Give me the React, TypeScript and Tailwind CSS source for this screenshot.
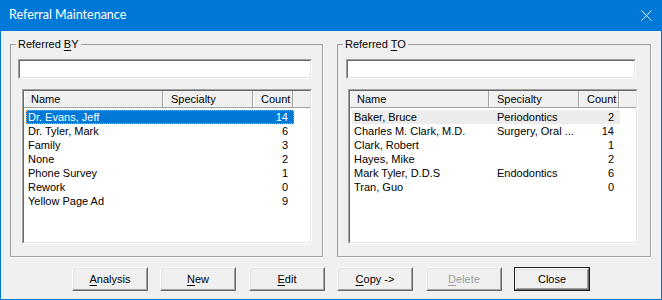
import React from 'react';

interface IRow {
  name: string;
  specialty: string;
  count: number;
}

const referredBy: IRow[] = [
  { name: 'Dr. Evans, Jeff', specialty: '', count: 14 },
  { name: 'Dr. Tyler, Mark', specialty: '', count: 6 },
  { name: 'Family', specialty: '', count: 3 },
  { name: 'None', specialty: '', count: 2 },
  { name: 'Phone Survey', specialty: '', count: 1 },
  { name: 'Rework', specialty: '', count: 0 },
  { name: 'Yellow Page Ad', specialty: '', count: 9 },
];

const referredTo: IRow[] = [
  { name: 'Baker, Bruce', specialty: 'Periodontics', count: 2 },
  { name: 'Charles M. Clark, M.D.', specialty: 'Surgery, Oral ...', count: 14 },
  { name: 'Clark, Robert', specialty: '', count: 1 },
  { name: 'Hayes, Mike', specialty: '', count: 2 },
  { name: 'Mark Tyler, D.D.S', specialty: 'Endodontics', count: 6 },
  { name: 'Tran, Guo', specialty: '', count: 0 },
];

const Mn: React.FC<{ children: React.ReactNode }> = ({ children }) => (
  <span className="underline decoration-1 underline-offset-[2px]">{children}</span>
);

const HeaderCell: React.FC<{ width?: string; children?: React.ReactNode }> = ({ width, children }) => (
  <div
    className={`${width ?? 'flex-1'} h-full flex items-center pl-[7px] border-r border-[#a0a0a0] shadow-[inset_1px_0_0_white]`}
  >
    {children}
  </div>
);

interface IListProps {
  rows: IRow[];
  selected: number;
  focused: boolean;
}

const ListView: React.FC<IListProps> = ({ rows, selected, focused }) => {
  return (
    <div className="w-[290px] h-[155px] border border-t-[#a0a0a0] border-l-[#a0a0a0] border-r-white border-b-white">
      <div className="h-full bg-white border border-t-[#696969] border-l-[#696969] border-r-[#e3e3e3] border-b-[#e3e3e3]">
        <div className="flex h-[17px] bg-[#f0f0f0] border-b border-[#a0a0a0]">
          <HeaderCell width="w-[139px]">Name</HeaderCell>
          <HeaderCell width="w-[90px]">
            <span className="pl-[1px]">Specialty</span>
          </HeaderCell>
          <HeaderCell width="w-[40px]">
            <span className="pl-[1px]">Count</span>
          </HeaderCell>
          <div className="flex-1 h-full shadow-[inset_1px_0_0_white]" />
        </div>
        <div className="pt-[2px]">
          {rows.map((row, i) => {
            const isSel = i === selected;
            const rowClass = isSel
              ? focused
                ? 'bg-[#0078d7] text-white outline outline-1 outline-dotted -outline-offset-1 outline-[#f7a04a]'
                : 'bg-[#ececec] text-black'
              : 'text-black';
            return (
              <div key={row.name} className={`ml-[2px] w-[268px] h-[14px] leading-[14px] flex ${rowClass}`}>
                <div className="w-[137px] pl-[2px] whitespace-nowrap overflow-hidden">{row.name}</div>
                <div className="w-[90px] pl-[8px] whitespace-nowrap overflow-hidden">{row.specialty}</div>
                <div className="w-[41px] pr-[6px] text-right">{row.count}</div>
              </div>
            );
          })}
        </div>
      </div>
    </div>
  );
};

const GroupBox: React.FC<{
  label: React.ReactNode;
  width: string;
  inputClass: string;
  listClass: string;
  children: React.ReactNode;
}> = ({ label, width, inputClass, listClass, children }) => (
  <fieldset
    className={`${width} border border-[#a0a0a0] shadow-[1px_1px_0_white] pb-[12px]`}
  >
    <legend className="ml-[5px] px-[2px] leading-[13px]">{label}</legend>
    <div
      className={`${inputClass} mt-[8px] h-[20px] bg-white border border-t-[#a0a0a0] border-l-[#a0a0a0] border-r-white border-b-white`}
    >
      <div className="h-full border border-t-[#696969] border-l-[#696969] border-r-[#e3e3e3] border-b-[#e3e3e3]" />
    </div>
    <div className={`${listClass} mt-[10px]`}>{children}</div>
  </fieldset>
);

const DlgButton: React.FC<{
  children: React.ReactNode;
  isDefault?: boolean;
  disabled?: boolean;
  className?: string;
}> = ({ children, isDefault, disabled, className }) => (
  <div
    className={`${className ?? ''} w-[76px] h-[24px] ${
      isDefault ? 'border border-[#1e1e1e]' : ''
    }`}
  >
    <div className="h-full border border-t-white border-l-white border-r-[#696969] border-b-[#696969]">
      <div
        className={`h-full flex items-center justify-center bg-[#f0f0f0] border border-t-[#e3e3e3] border-l-[#e3e3e3] border-r-[#a0a0a0] border-b-[#a0a0a0] ${
          disabled ? 'text-[#a0a0a0]' : 'text-black'
        }`}
      >
        {children}
      </div>
    </div>
  </div>
);

export default function App() {
  return (
    <div className="w-[662px] h-[300px] flex flex-col font-['Liberation_Sans',Arial,sans-serif] text-[11px] text-black">
      <div className="h-[31px] bg-[#0078d7] flex items-center justify-between pl-[9px] pr-[10px] text-white">
        <span className="font-['Lato','Noto_Sans',sans-serif] text-[12.5px]">Referral Maintenance</span>
        <svg width="11" height="11" viewBox="0 0 11 11" className="mt-[-1px]">
          <path d="M0.5 0.5 L10.5 10.5 M10.5 0.5 L0.5 10.5" stroke="white" strokeWidth="1" />
        </svg>
      </div>
      <div className="flex-1 flex flex-col bg-[#f0f0f0] border-x border-b border-[#0078d7]">
        <div className="flex mt-[7px] ml-[9px] gap-[14px]">
          <GroupBox
            label={
              <>
                Referred <Mn>B</Mn>Y
              </>
            }
            width="w-[313px]"
            inputClass="ml-[7px] w-[294px]"
            listClass="ml-[11px]"
          >
            <ListView rows={referredBy} selected={0} focused />
          </GroupBox>
          <GroupBox
            label={
              <>
                Referred <Mn>T</Mn>O
              </>
            }
            width="w-[314px]"
            inputClass="ml-[8px] w-[290px]"
            listClass="ml-[10px]"
          >
            <ListView rows={referredTo} selected={0} focused={false} />
          </GroupBox>
        </div>
        <div className="flex mt-[10px] ml-[71px]">
          <DlgButton>
            <Mn>A</Mn>nalysis
          </DlgButton>
          <DlgButton className="ml-[12px]">
            <Mn>N</Mn>ew
          </DlgButton>
          <DlgButton className="ml-[13px]">
            <Mn>E</Mn>dit
          </DlgButton>
          <DlgButton className="ml-[12px]">
            <Mn>C</Mn>opy -&gt;
          </DlgButton>
          <DlgButton className="ml-[13px]" disabled>
            <Mn>D</Mn>elete
          </DlgButton>
          <DlgButton className="ml-[12px]" isDefault>
            Close
          </DlgButton>
        </div>
      </div>
    </div>
  );
}
